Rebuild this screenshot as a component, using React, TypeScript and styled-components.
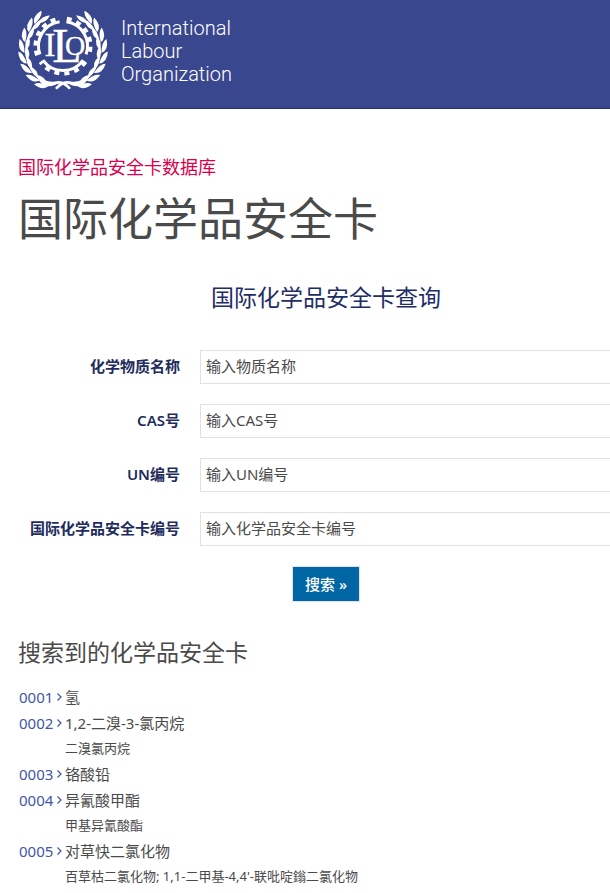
import React from "react";
import styled, { createGlobalStyle } from "styled-components";

const GlobalStyle = createGlobalStyle`
  *, *::before, *::after { box-sizing: border-box; }
  body {
    margin: 0;
    background: #fff;
    color: #4a4a4a;
    font-family: "Noto Sans", "Noto Sans CJK SC", sans-serif;
    font-size: 15px;
  }
`;

const Page = styled.div`
  overflow-x: hidden;
`;

const Header = styled.header`
  padding: 11px 16px 17px;
  background: #39478f;
  border-bottom: 1px solid #262f66;
`;

const Brand = styled.a`
  display: flex;
  width: fit-content;
  align-items: flex-start;
  gap: 11px;
  color: #fff;
  text-decoration: none;
`;

const BrandName = styled.span`
  padding-top: 6px;
  font-family: Roboto, sans-serif;
  font-size: 20px;
  font-weight: 350;
  line-height: 23px;
  span { display: block; }
`;

const Main = styled.main`
  padding: 44px 18px 0;
`;

const Kicker = styled.p`
  margin: 0;
  color: #d9004c;
  font-size: 18px;
  line-height: 28px;
`;

const Title = styled.h1`
  margin: 6px 0 0;
  font-size: 45px;
  font-weight: 400;
  line-height: 64px;
`;

const SearchForm = styled.form`
  display: flex;
  flex-direction: column;
  gap: 20px;
  min-width: 616px;
  padding-top: 30px;
`;

const FormTitle = styled.h2`
  margin: 0 0 17px;
  color: #1e2d66;
  font-size: 23px;
  font-weight: 400;
  line-height: 32px;
  text-align: center;
`;

const Field = styled.div`
  display: grid;
  grid-template-columns: 162px 1fr;
  column-gap: 20px;
  align-items: center;
`;

const Label = styled.label`
  padding-bottom: 3px;
  color: #1e2d5e;
  font-weight: 600;
  text-align: right;
`;

const TextInput = styled.input`
  width: 100%;
  height: 34px;
  padding: 0 5px 2px;
  border: 1px solid #e1e1e1;
  border-radius: 0;
  background: #fff;
  color: #4a4a4a;
  font: inherit;
  &::placeholder { color: #4a4a4a; opacity: 1; }
`;

const SubmitButton = styled.button`
  align-self: center;
  height: 36px;
  padding: 0 12px 2px;
  border: 1px solid #dde4ea;
  background: #0066a4;
  color: #fff;
  font: inherit;
  font-weight: 500;
`;

const ResultsTitle = styled.h2`
  margin: 34px 0 16px;
  font-size: 23px;
  font-weight: 400;
  line-height: 32px;
`;

const Results = styled.ul`
  margin: 0;
  padding: 0;
  list-style: none;
`;

const Result = styled.li`
  display: grid;
  grid-template-columns: 47px 1fr;
  line-height: 26px;
`;

const CardLink = styled.a`
  display: flex;
  align-items: center;
  gap: 4px;
  padding-left: 1px;
  color: #4257a8;
  text-decoration: none;
`;

const Synonym = styled.span`
  grid-column: 2;
  font-size: 13px;
  line-height: 25px;
`;

const fields = [
  { id: "name", label: "化学物质名称", hint: "输入物质名称" },
  { id: "cas", label: "CAS号", hint: "输入CAS号" },
  { id: "un", label: "UN编号", hint: "输入UN编号" },
  { id: "icsc", label: "国际化学品安全卡编号", hint: "输入化学品安全卡编号" },
];

const cards = [
  { no: "0001", name: "氢" },
  { no: "0002", name: "1,2-二溴-3-氯丙烷", synonym: "二溴氯丙烷" },
  { no: "0003", name: "铬酸铅" },
  { no: "0004", name: "异氰酸甲酯", synonym: "甲基异氰酸酯" },
  {
    no: "0005",
    name: "对草快二氯化物",
    synonym: "百草枯二氯化物; 1,1-二甲基-4,4'-联吡啶鎓二氯化物",
  },
];

const arc = (r: number, from: number, to: number) => {
  const point = (deg: number) => {
    const a = (deg * Math.PI) / 180;
    return `${(r * Math.cos(a)).toFixed(2)} ${(r * Math.sin(a)).toFixed(2)}`;
  };
  return `M${point(from)} A${r} ${r} 0 0 1 ${point(to)}`;
};

const gearArcs: [number, number][] = [
  [160, 262],
  [278, 380],
  [35, 145],
];

const leafAngles = [116, 132, 148, 164, 180, 196, 212, 227];

function Branch() {
  return (
    <g fill="#fff">
      {leafAngles.map((deg) => (
        <g key={deg} transform={`rotate(${deg}) translate(38 0)`}>
          <path d="M0.4 -3 Q8 0 5.5 11 Q0.5 8 0.4 -3Z" />
          <path d="M-0.4 0 Q-7 4 -4 14 Q0.5 10 -0.4 0Z" />
        </g>
      ))}
      <path d="M-27 25 Q-17 33 -8 31.5 Q1 29 8 38 L6 39.5 Q-2 31 -8 35 Q-21 40 -27 25Z" />
    </g>
  );
}

function Emblem() {
  return (
    <svg width="94" height="80" viewBox="-47 -39 94 80" aria-hidden="true">
      <Branch />
      <g transform="scale(-1 1)">
        <Branch />
      </g>
      <g transform="translate(0 -4)" fill="none" stroke="#fff">
        {gearArcs.map(([from, to]) => (
          <g key={from}>
            <path d={arc(24.5, from, to)} strokeWidth="3" />
            <path
              d={arc(27.5, from, to)}
              strokeWidth="4"
              strokeDasharray="5 5"
            />
          </g>
        ))}
      </g>
      <g
        fill="#fff"
        stroke="#fff"
        strokeWidth="0.3"
        fontFamily="Liberation Serif, serif"
        textAnchor="middle"
      >
        <text x="-13" y="6" fontSize="33">I</text>
        <text x="4" y="12" fontSize="48">L</text>
        <text x="12" y="5" fontSize="28">O</text>
      </g>
    </svg>
  );
}

export default function App() {
  return (
    <Page>
      <GlobalStyle />
      <Header>
        <Brand href="#">
          <Emblem />
          <BrandName>
            <span>International</span>
            <span>Labour</span>
            <span>Organization</span>
          </BrandName>
        </Brand>
      </Header>
      <Main>
        <Kicker>国际化学品安全卡数据库</Kicker>
        <Title>国际化学品安全卡</Title>
        <SearchForm onSubmit={(e) => e.preventDefault()}>
          <FormTitle>国际化学品安全卡查询</FormTitle>
          {fields.map((f) => (
            <Field key={f.id}>
              <Label htmlFor={f.id}>{f.label}</Label>
              <TextInput id={f.id} type="text" placeholder={f.hint} />
            </Field>
          ))}
          <SubmitButton type="submit">搜索 »</SubmitButton>
        </SearchForm>
        <ResultsTitle>搜索到的化学品安全卡</ResultsTitle>
        <Results>
          {cards.map((c) => (
            <Result key={c.no}>
              <CardLink href={`#${c.no}`}>
                {c.no}
                <svg width="5" height="8" viewBox="0 0 5 8" aria-hidden="true">
                  <path d="M0.5 0.5 L4 4 L0.5 7.5" fill="none" stroke="currentColor" strokeWidth="1.2" />
                </svg>
              </CardLink>
              <span>{c.name}</span>
              {c.synonym && <Synonym>{c.synonym}</Synonym>}
            </Result>
          ))}
        </Results>
      </Main>
    </Page>
  );
}
